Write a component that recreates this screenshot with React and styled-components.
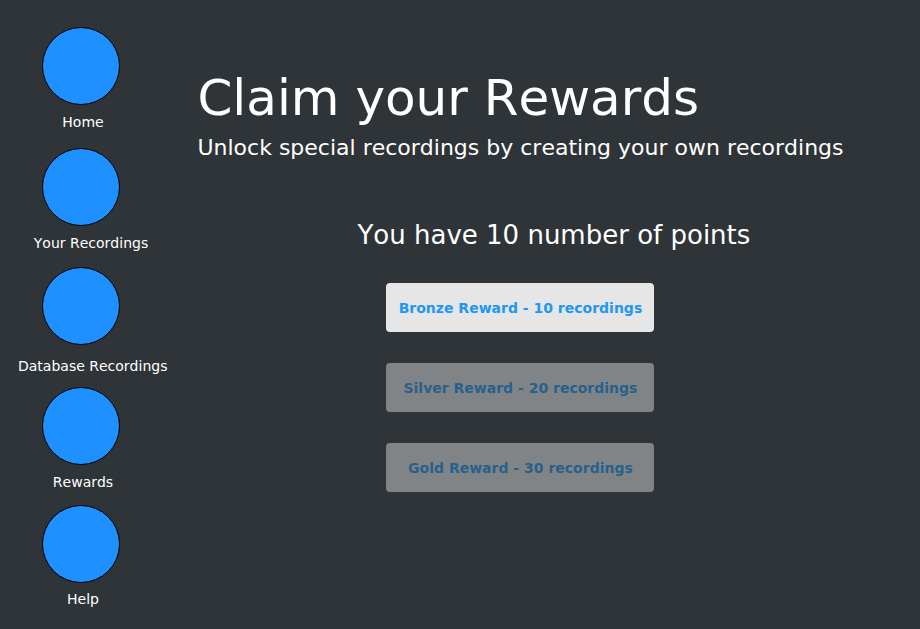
import React from "react";
import styled, { createGlobalStyle } from "styled-components";

const GlobalStyle = createGlobalStyle`
  * { box-sizing: border-box; }
  body {
    margin: 0;
    background: #2f3438;
    color: #ffffff;
    font-family: "DejaVu Sans", sans-serif;
    font-kerning: none;
  }
`;

const Page = styled.div`
  display: flex;
  min-height: 100vh;
`;

const Sidebar = styled.nav`
  flex: none;
  display: flex;
  flex-direction: column;
  align-items: flex-start;
  padding: 27px 16px 0 18px;
`;

const NavItem = styled.button`
  display: flex;
  flex-direction: column;
  align-items: center;
  gap: ${(p) => p.$gap}px;
  min-width: ${(p) => (p.$wide ? 146 : 130)}px;
  margin: 0 0 ${(p) => p.$after}px;
  padding: 0;
  border: 0;
  background: none;
  color: inherit;
  font: 14px/16px "DejaVu Sans", sans-serif;
  font-kerning: none;
  cursor: pointer;
`;

const Disc = styled.span`
  align-self: flex-start;
  width: 78px;
  height: 78px;
  margin-left: 24px;
  border: 1px solid #000000;
  border-radius: 50%;
  background: #1e90ff;
`;

const NavLabel = styled.span`
  white-space: nowrap;
`;

const Main = styled.main`
  flex: 1;
  padding: 68px 24px 24px 14px;
`;

const Title = styled.h1`
  margin: 0;
  font-size: 50px;
  line-height: 60px;
  font-weight: 400;
`;

const Subtitle = styled.p`
  margin: 7px 0 0;
  font-size: 22px;
  line-height: 26px;
`;

const Points = styled.p`
  margin: 58px 0 0 160px;
  font-size: 26px;
  line-height: 32px;
`;

const Rewards = styled.div`
  display: flex;
  flex-direction: column;
  gap: 31px;
  width: 268px;
  margin: 32px 0 0 189px;
`;

const Reward = styled.button`
  height: 49px;
  padding: 0;
  border: 0;
  border-radius: 4px;
  background: #e6e6e6;
  color: #2196f3;
  font: bold 14px/18px "DejaVu Sans", sans-serif;
  font-kerning: none;
  opacity: ${(p) => (p.disabled ? 0.45 : 1)};
`;

const navItems = [
  { label: "Home", gap: 9, after: 18 },
  { label: "Your Recordings", gap: 9, after: 16, wide: true },
  { label: "Database Recordings", gap: 13, after: 13, wide: true },
  { label: "Rewards", gap: 9, after: 15 },
  { label: "Help", gap: 8, after: 0 },
];

const rewards = [
  { name: "Bronze", cost: 10 },
  { name: "Silver", cost: 20 },
  { name: "Gold", cost: 30 },
];

const points = 10;

export default function App() {
  return (
    <>
      <GlobalStyle />
      <Page>
        <Sidebar>
          {navItems.map(({ label, gap, after, wide }) => (
            <NavItem key={label} type="button" $gap={gap} $after={after} $wide={wide}>
              <Disc />
              <NavLabel>{label}</NavLabel>
            </NavItem>
          ))}
        </Sidebar>
        <Main>
          <Title>Claim your Rewards</Title>
          <Subtitle>Unlock special recordings by creating your own recordings</Subtitle>
          <Points>You have {points} number of points</Points>
          <Rewards>
            {rewards.map(({ name, cost }) => (
              <Reward key={name} type="button" disabled={points < cost}>
                {`${name} Reward - ${cost} recordings`}
              </Reward>
            ))}
          </Rewards>
        </Main>
      </Page>
    </>
  );
}
